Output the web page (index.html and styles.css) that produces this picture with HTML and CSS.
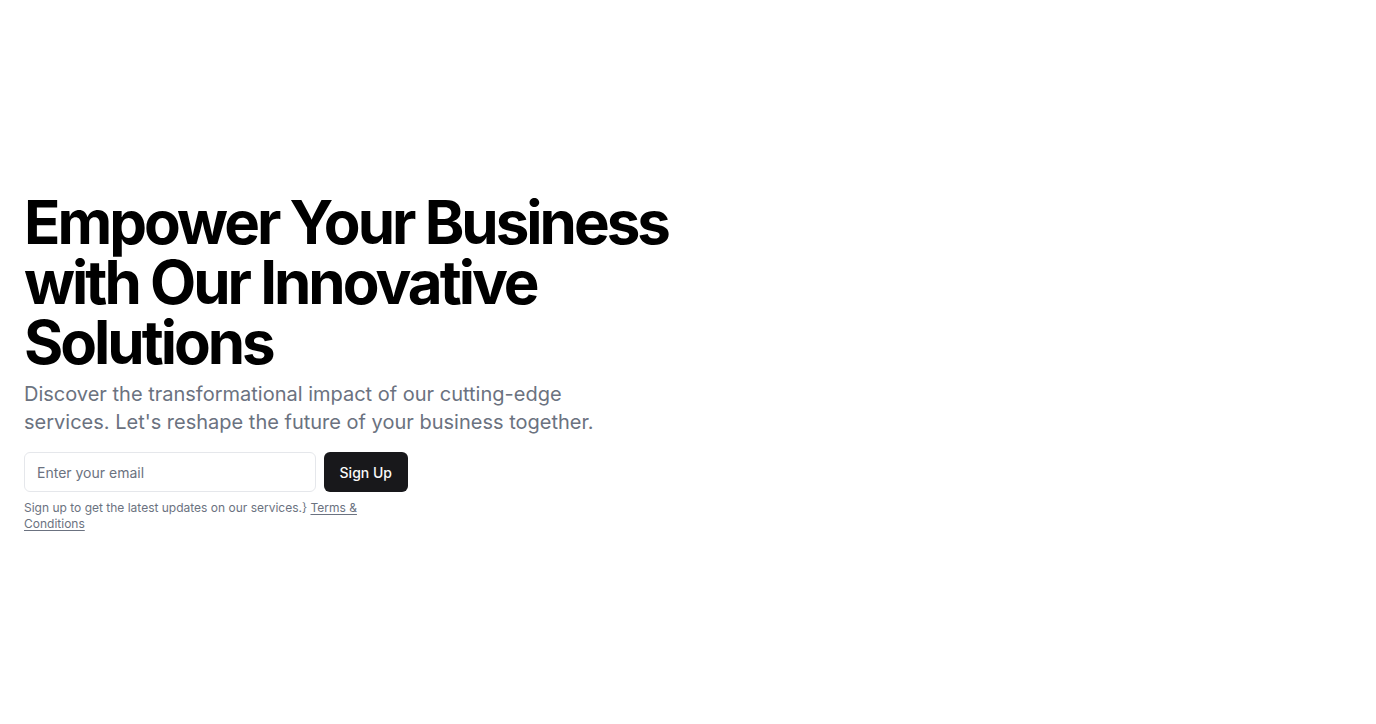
FILE: index.html
```html
<!DOCTYPE html>
<html lang="en">
<head>
<meta charset="utf-8">
<title>Empower Your Business</title>
<link rel="stylesheet" href="styles.css">
</head>
<body>
<section class="hero">
  <div class="container">
    <div class="grid">
      <div class="copy">
        <div class="text">
          <h1 class="title">Empower Your Business with Our Innovative Solutions</h1>
          <p class="lead">Discover the transformational impact of our cutting-edge services. Let's reshape the future of your business together.</p>
        </div>
        <div class="signup">
          <form class="form">
            <input class="email" type="email" placeholder="Enter your email">
            <button class="btn" type="submit">Sign Up</button>
          </form>
          <p class="note">Sign up to get the latest updates on our services.} <a class="link" href="#">Terms &amp; Conditions</a></p>
        </div>
      </div>
      <div class="side"></div>
    </div>
  </div>
</section>
</body>
</html>
```
FILE: styles.css
```css
* { box-sizing: border-box; }
html, body { margin: 0; padding: 0; }
body {
  font-family: Inter, "Liberation Sans", sans-serif;
  background: #ffffff;
  color: #030712;
}
.hero {
  width: 100%;
  padding: 192px 0;
}
.container {
  padding: 0 24px;
}
.grid {
  display: grid;
  grid-template-columns: 1fr 600px;
  gap: 48px;
}
.copy {
  display: flex;
  flex-direction: column;
  gap: 16px;
}
.text {
  display: flex;
  flex-direction: column;
  gap: 8px;
}
.title {
  margin: 0;
  font-size: 60px;
  line-height: 1;
  font-weight: 700;
  letter-spacing: -0.05em;
  color: #000000;
}
.lead {
  margin: 0;
  max-width: 600px;
  font-size: 20px;
  line-height: 28px;
  color: #6b7280;
}
.signup {
  width: 100%;
  max-width: 384px;
  display: flex;
  flex-direction: column;
  gap: 8px;
}
.form {
  display: flex;
  gap: 8px;
  margin: 0;
}
.email {
  flex: 1;
  min-width: 0;
  height: 40px;
  border: 1px solid #e5e7eb;
  border-radius: 6px;
  padding: 8px 12px;
  font-family: inherit;
  font-size: 14px;
  color: #111827;
  background: #ffffff;
  outline: none;
}
.email::placeholder { color: #6b7280; }
.btn {
  height: 40px;
  padding: 8px 16px;
  border: 0;
  border-radius: 6px;
  background: #18181b;
  color: #fafafa;
  font-family: inherit;
  font-size: 14px;
  font-weight: 500;
  cursor: pointer;
}
.note {
  margin: 0;
  font-size: 12px;
  line-height: 16px;
  color: #6b7280;
}
.link {
  color: inherit;
  text-decoration: underline;
  text-underline-offset: 2px;
}
```
